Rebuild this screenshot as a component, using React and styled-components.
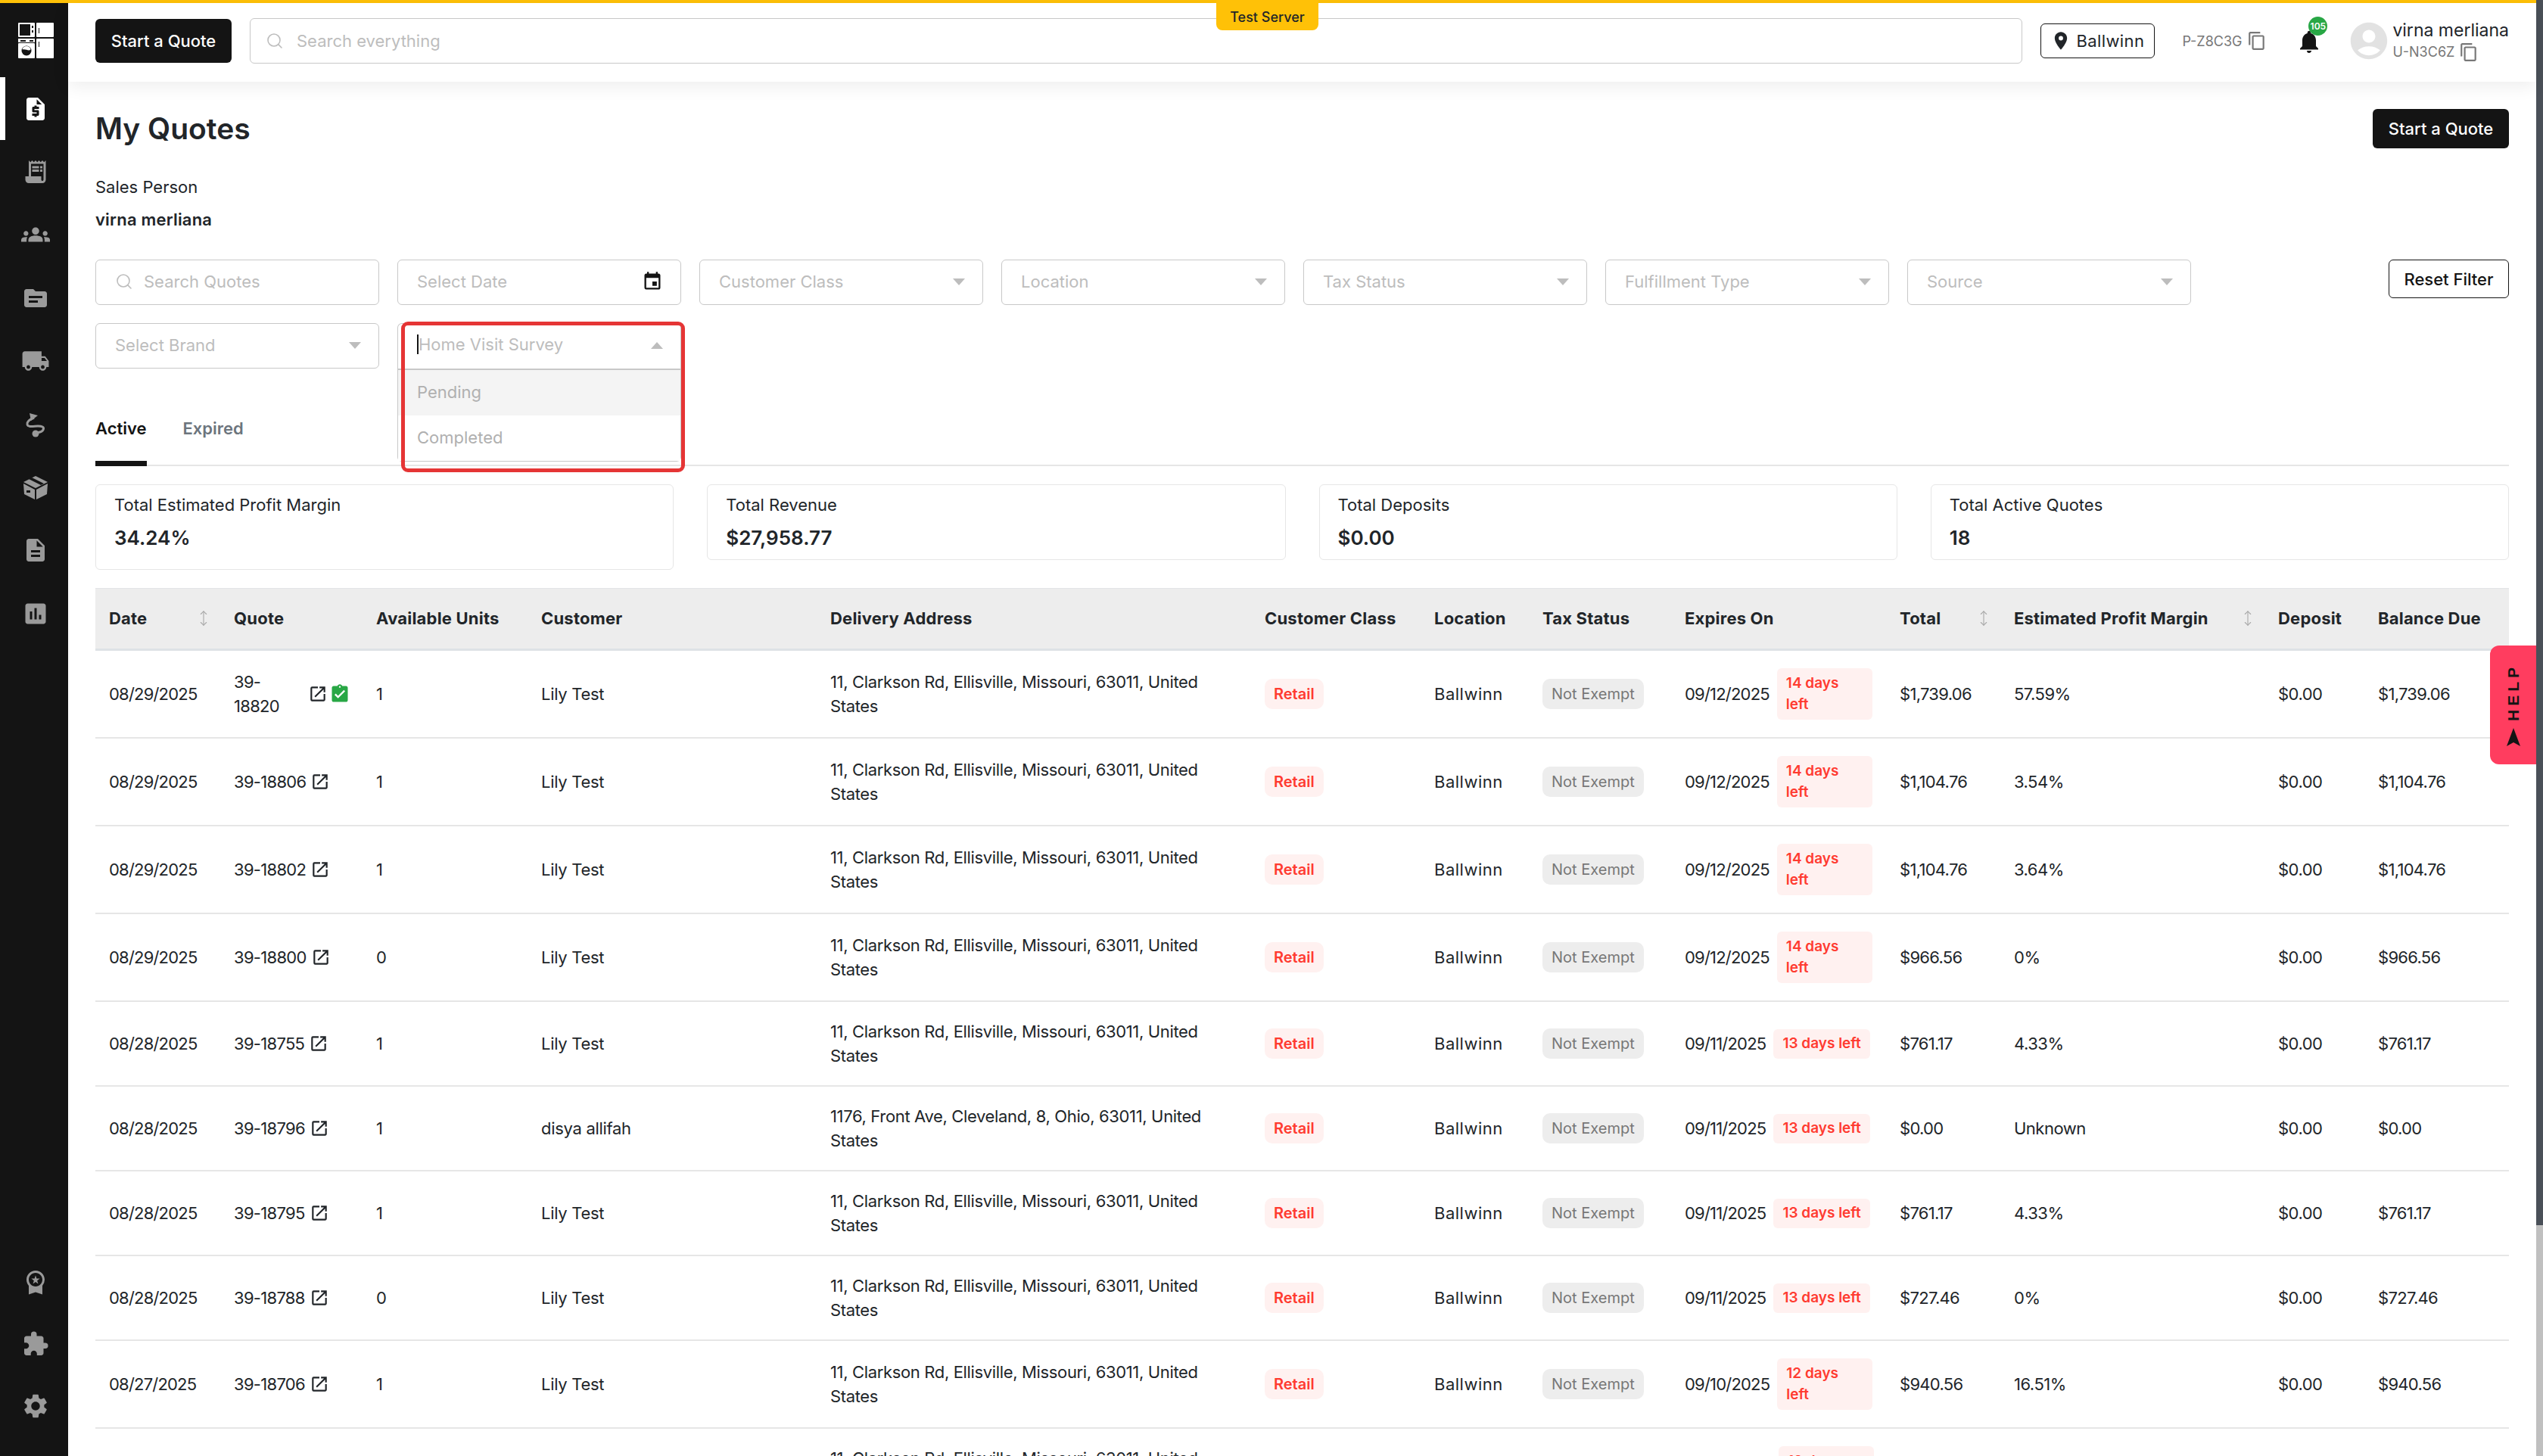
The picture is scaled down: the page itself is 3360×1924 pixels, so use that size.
import React from 'react';
import styled, { createGlobalStyle } from 'styled-components';
import {
  MdRequestQuote,
  MdReceiptLong,
  MdGroups,
  MdTopic,
  MdLocalShipping,
  MdDescription,
  MdAssessment,
  MdWorkspacePremium,
  MdExtension,
  MdSettings,
  MdEvent,
  MdLocationOn,
  MdOutlineContentCopy,
  MdNotifications,
  MdAccountCircle,
  MdOpenInNew,
  MdAssignmentTurnedIn,
} from 'react-icons/md';
import { Search, MoveVertical } from 'lucide-react';

const GlobalStyle = createGlobalStyle`
  html, body {
    margin: 0;
    padding: 0;
    background: #fff;
    font-family: Inter, "Liberation Sans", sans-serif;
    color: #212529;
  }
  * { box-sizing: border-box; }
`;

const Page = styled.div`
  position: relative;
  display: flex;
  height: 1924px;
  overflow: hidden;
`;

const Column = styled.div`
  flex: 1;
  min-width: 0;
  display: flex;
  flex-direction: column;
`;

const TopStripe = styled.div`
  height: 4px;
  flex: none;
  background: #ffc107;
`;

const Body = styled.div`
  flex: 1;
  min-height: 0;
  display: flex;
`;

const Scrollbar = styled.div`
  width: 9px;
  flex: none;
  background: #c0c0c0;
`;

const ScrollThumb = styled.div`
  height: 1619px;
  background: #4a5058;
`;

const Sidebar = styled.nav`
  width: 90px;
  flex: none;
  background: #141414;
  display: flex;
  flex-direction: column;
  justify-content: space-between;
  padding-bottom: 25px;
`;

const LogoBox = styled.div`
  height: 98px;
  padding: 26px 0 0 24px;
`;

const NavItem = styled.div`
  height: ${props => props.$h || 83.4}px;
  display: flex;
  align-items: center;
  justify-content: center;
  color: ${props => (props.$active ? '#fff' : '#9a9a9a')};
  border-left: 7px solid ${props => (props.$active ? '#fff' : 'transparent')};
  padding-right: 4px;
`;

const Main = styled.main`
  flex: 1;
  min-width: 0;
  display: flex;
  flex-direction: column;
`;

const Header = styled.header`
  position: relative;
  height: 104px;
  flex: none;
  display: flex;
  align-items: center;
  padding: 0 36px 4px;
  gap: 24px;
  background: #fff;
  box-shadow: 0 6px 22px rgba(0, 0, 0, 0.07);
`;

const ServerBadge = styled.div`
  position: absolute;
  top: -4px;
  left: 1517px;
  width: 135px;
  height: 40px;
  padding-top: 4px;
  display: flex;
  align-items: center;
  justify-content: center;
  background: #ffc107;
  border-radius: 0 0 8px 8px;
  font-size: 18px;
  font-weight: 500;
`;

const DarkButton = styled.button`
  width: 180px;
  height: ${props => props.$h || 58}px;
  flex: none;
  border: 0;
  border-radius: 6px;
  background: #141414;
  color: #fff;
  font: 500 22px Inter, "Liberation Sans", sans-serif;
`;

const SearchBar = styled.div`
  flex: 1;
  height: 60px;
  display: flex;
  align-items: center;
  gap: 17px;
  padding-left: 20px;
  border: 1px solid #c8c8c8;
  border-radius: 6px;
  color: #bdbdbd;
  font-size: 22px;
`;

const LocationButton = styled.div`
  width: 151px;
  height: 46px;
  flex: none;
  display: flex;
  align-items: center;
  gap: 6px;
  padding-left: 12px;
  border: 1px solid #141414;
  border-radius: 6px;
  font-size: 22px;
  letter-spacing: 0.4px;
`;

const CodeRow = styled.div`
  display: flex;
  align-items: center;
  gap: 6px;
  color: #777;
  font-size: ${props => props.$size || 18}px;
`;

const PlantCode = styled(CodeRow)`
  width: 120px;
  margin-left: 12px;
`;

const BellBox = styled.div`
  position: relative;
  width: 34px;
  height: 34px;
  margin-left: 6px;
  color: #141414;
`;

const BellBadge = styled.span`
  position: absolute;
  top: -15px;
  left: 17px;
  width: 25px;
  height: 25px;
  border-radius: 50%;
  background: #28a745;
  color: #fff;
  font-size: 12px;
  font-weight: 600;
  display: flex;
  align-items: center;
  justify-content: center;
`;

const UserBox = styled.div`
  display: flex;
  align-items: center;
  gap: 2px;
  margin-left: 10px;
  color: #e2e2e2;
`;

const UserText = styled.div`
  display: flex;
  flex-direction: column;
  gap: 3px;
  color: #212529;
  font-size: 23px;
  line-height: 26px;
`;

const Content = styled.div`
  flex: 1;
  min-height: 0;
  padding: 36px 36px 0;
`;

const TitleRow = styled.div`
  display: flex;
  justify-content: space-between;
  align-items: flex-start;
  height: 88px;
`;

const Title = styled.h1`
  margin: 0;
  font-size: 39px;
  line-height: 52px;
  font-weight: 600;
`;

const Person = styled.div`
  height: 86px;
  padding-top: 2px;
  font-size: 22px;
  line-height: 27px;
`;

const PersonName = styled.div`
  margin-top: 16px;
  font-weight: 600;
  letter-spacing: 0.2px;
`;

const FilterSection = styled.section`
  display: flex;
  justify-content: space-between;
  align-items: flex-start;
  margin-top: 25px;
`;

const FilterGrid = styled.div`
  display: grid;
  grid-template-columns: repeat(7, 375px);
  grid-auto-rows: 60px;
  gap: 24px;
`;

const Field = styled.div`
  position: relative;
  display: flex;
  align-items: center;
  justify-content: space-between;
  padding: 0 23px 2px 25px;
  border: 1px solid #c8c8c8;
  border-radius: ${props => (props.$open ? '6px 6px 0 0' : '6px')};
  border-bottom-width: ${props => (props.$open ? 0 : 1)}px;
  color: #bdbdbd;
  font-size: 22px;
`;

const SearchField = styled(Field)`
  justify-content: flex-start;
  gap: 14px;
`;

const Caret = styled.span`
  width: 0;
  height: 0;
  border-left: 8px solid transparent;
  border-right: 8px solid transparent;
  ${props =>
    props.$up ? 'border-bottom: 9px solid #bdbdbd;' : 'border-top: 9px solid #bdbdbd;'}
`;

const TypedText = styled.span`
  border-left: 2px solid #141414;
  line-height: 26px;
  margin-top: -4px;
`;

const Menu = styled.div`
  position: absolute;
  z-index: 3;
  top: 59px;
  left: -1px;
  right: -1px;
  background: #fff;
  border: 1px solid #c8c8c8;
  border-top: 2px solid #c8c8c8;
  border-radius: 0 0 6px 6px;
  color: #b0b0b0;
`;

const MenuOption = styled.div`
  height: 60px;
  display: flex;
  align-items: center;
  padding: 0 0 3px 25px;
  background: ${props => (props.$hover ? '#f4f4f4' : '#fff')};
`;

const RedMark = styled.div`
  position: absolute;
  z-index: 4;
  top: -3px;
  left: 4px;
  width: 375px;
  height: 199px;
  border: 5px solid #e53535;
  border-radius: 9px;
  pointer-events: none;
`;

const OutlineButton = styled.button`
  width: 159px;
  height: 51px;
  background: #fff;
  border: 1px solid #141414;
  border-radius: 6px;
  color: #141414;
  font: 500 22px Inter, "Liberation Sans", sans-serif;
`;

const Tabs = styled.div`
  display: flex;
  gap: 48px;
  margin-top: 66px;
  border-bottom: 2px solid #e6e6e6;
  height: 63px;
`;

const Tab = styled.div`
  height: 63px;
  font-size: 22px;
  line-height: 26px;
  font-weight: 600;
  color: ${props => (props.$active ? '#141414' : '#6c757d')};
  border-bottom: 7px solid ${props => (props.$active ? '#141414' : 'transparent')};
`;

const StatGrid = styled.div`
  display: grid;
  grid-template-columns: repeat(4, 1fr);
  gap: 44px;
  align-items: start;
  margin-top: 24px;
`;

const StatCard = styled.div`
  height: ${props => (props.$tall ? 113 : 100)}px;
  padding: 12px 24px 0;
  border: 1px solid #e6e6e6;
  border-radius: 6px;
  font-size: 22px;
  line-height: 28px;
`;

const StatValue = styled.div`
  margin-top: 12px;
  font-size: 26px;
  line-height: 36px;
  font-weight: 600;
`;

const Table = styled.table`
  width: 3189px;
  margin-top: 24px;
  border-collapse: collapse;
  table-layout: fixed;
  font-size: 22px;
  line-height: 32px;
`;

const Th = styled.th`
  height: 81px;
  padding: 0 0 2px 18px;
  background: #ededed;
  border-top: 1px solid #e2e4e7;
  border-bottom: 3px solid #dee2e6;
  text-align: left;
  font-size: 22px;
  font-weight: 700;
  color: #212529;
  white-space: nowrap;
`;

const ThInner = styled.div`
  display: flex;
  align-items: center;
  justify-content: space-between;
  padding-right: 11px;
  letter-spacing: 0.2px;
  color: #212529;

  svg {
    color: #a8a8a8;
    flex: none;
  }
`;

const Tr = styled.tr`
  border-bottom: 2px solid #e6e6e6;
`;

const Td = styled.td`
  padding: 23px 18px;
  font-weight: 400;
  vertical-align: middle;
  letter-spacing: ${props => props.$track || 0}px;
`;

const ClippedTd = styled(Td)`
  vertical-align: top;
`;

const QuoteCell = styled.div`
  display: flex;
  align-items: center;
  gap: 6px;
  margin-right: -12px;
  color: #212529;
`;

const QuoteNumber = styled.span`
  letter-spacing: -0.7px;
  ${props => (props.$wrap ? 'width: 92px;' : 'white-space: nowrap;')}
`;

const AddressText = styled.div`
  width: 510px;
  letter-spacing: -0.35px;
`;

const Chip = styled.span`
  display: inline-flex;
  align-items: center;
  height: 40px;
  padding: 0 12px;
  border-radius: 10px;
  font-size: 20px;
  white-space: nowrap;
  background: ${props => (props.$red ? '#fff1f0' : '#ededed')};
  color: ${props => (props.$red ? '#ff3b30' : '#777')};
  font-weight: ${props => (props.$red ? 600 : 400)};
`;

const ExpiresCell = styled.div`
  display: flex;
  align-items: center;
  gap: 10px;
  margin-right: -18px;
  white-space: nowrap;
`;

const ExpiryDate = styled.span`
  letter-spacing: -0.8px;
`;

const DaysTag = styled.span`
  flex: none;
  padding: ${props => (props.$stack ? 6 : 5.5)}px 12px;
  border-radius: 6px;
  background: #fff1f0;
  color: #ff3b30;
  font-size: 19px;
  line-height: 28px;
  font-weight: 600;
  white-space: ${props => (props.$stack ? 'normal' : 'nowrap')};
  width: ${props => (props.$stack ? '126px' : 'auto')};
  margin-left: ${props => props.$offset || 0}px;
`;

const HelpTab = styled.div`
  position: absolute;
  z-index: 5;
  top: 853px;
  right: 9px;
  width: 61px;
  height: 157px;
  display: flex;
  flex-direction: column;
  align-items: center;
  justify-content: center;
  gap: 8px;
  background: #ff3d5f;
  border-radius: 12px 0 0 12px;
  color: #141414;
`;

const HelpLabel = styled.span`
  writing-mode: vertical-rl;
  transform: rotate(180deg);
  font: 700 21px "Liberation Sans", sans-serif;
  letter-spacing: 5px;
`;

const Logo = () => (
  <svg width="47" height="47" viewBox="0 0 47 47">
    <rect x="0" y="0" width="22" height="19" rx="1" fill="#fff" />
    <rect x="2" y="2" width="14" height="15" fill="#141414" />
    <rect x="18" y="4" width="2" height="3" fill="#141414" />
    <rect x="18" y="10" width="2" height="3" fill="#141414" />
    <rect x="24" y="0" width="23" height="19" rx="1" fill="#fff" />
    <rect x="27" y="7" width="1" height="7" fill="#141414" />
    <rect x="0" y="21" width="22" height="5" fill="#fff" />
    <rect x="3" y="23" width="7" height="2" fill="#141414" />
    <rect x="15" y="23" width="5" height="2" fill="#141414" />
    <rect x="0" y="27" width="22" height="20" rx="1" fill="#fff" />
    <circle cx="11" cy="37" r="6.5" fill="#141414" />
    <path d="M5.5 35.5a5.6 5.6 0 0 1 11 0c-3 2.4-6 -1-11 0z" fill="#fff" />
    <rect x="24" y="21" width="23" height="26" rx="1" fill="#fff" />
    <rect x="27" y="25" width="1" height="7" fill="#141414" />
  </svg>
);

const RouteIcon = () => (
  <svg width="36" height="36" viewBox="0 0 36 36" fill="none">
    <path d="M10 3l11 3-9 7z" fill="currentColor" />
    <path
      d="M15 10c-5 2-10 5-9 9s9 2 14 2 9 1 7 5-8 3-9 4"
      transform="translate(1 -1)"
      stroke="currentColor"
      strokeWidth="3"
    />
    <circle cx="18" cy="30" r="4.5" fill="currentColor" />
  </svg>
);

const BoxIcon = () => (
  <svg width="36" height="36" viewBox="0 0 36 36">
    <path d="M2 11l16-8 16 8-16 8z" fill="currentColor" />
    <path d="M9 7l16 8 4-2L13 5z" fill="#141414" />
    <path d="M2 13l15 8v13L3 27z" fill="currentColor" />
    <path d="M19 21l15-8-1 14-14 7z" fill="currentColor" />
    <rect x="6" y="22" width="5" height="3" fill="#141414" />
  </svg>
);

const CopyIcon = ({ size = 26 }) => <MdOutlineContentCopy size={size} />;

const HelpArrow = () => (
  <svg width="20" height="24" viewBox="0 0 20 24">
    <path d="M10 0l9 24-9-5-9 5z" fill="#141414" />
  </svg>
);

const SortIcon = () => <MoveVertical size={22} strokeWidth={1.2} />;

const navTop = [
  <MdRequestQuote size={36} />,
  <MdReceiptLong size={36} />,
  <MdGroups size={38} />,
  <MdTopic size={36} />,
  <MdLocalShipping size={38} />,
  <RouteIcon />,
  <BoxIcon />,
  <MdDescription size={36} />,
  <MdAssessment size={36} />,
];

const navBottom = [
  <MdWorkspacePremium size={36} />,
  <MdExtension size={36} />,
  <MdSettings size={38} />,
];

const topFilters = ['Customer Class', 'Location', 'Tax Status', 'Fulfillment Type', 'Source'];

const stats = [
  { label: 'Total Estimated Profit Margin', value: '34.24%', tall: true },
  { label: 'Total Revenue', value: '$27,958.77' },
  { label: 'Total Deposits', value: '$0.00' },
  { label: 'Total Active Quotes', value: '18' },
];

const columns = [
  { label: 'Date', width: 165, sort: true },
  { label: 'Quote', width: 188 },
  { label: 'Available Units', width: 218 },
  { label: 'Customer', width: 382 },
  { label: 'Delivery Address', width: 574 },
  { label: 'Customer Class', width: 224 },
  { label: 'Location', width: 143 },
  { label: 'Tax Status', width: 188 },
  { label: 'Expires On', width: 284 },
  { label: 'Total', width: 151, sort: true },
  { label: 'Estimated Profit Margin', width: 349, sort: true },
  { label: 'Deposit', width: 132 },
  { label: 'Balance Due', width: 191 },
];

const clarkson = '11, Clarkson Rd, Ellisville, Missouri, 63011, United States';
const front = '1176, Front Ave, Cleveland, 8, Ohio, 63011, United States';

const rows = [
  { date: '08/29/2025', quote: '39-18820', units: 1, customer: 'Lily Test', address: clarkson, expires: '09/12/2025', days: '14 days left', total: '$1,739.06', margin: '57.59%', balance: '$1,739.06', done: true },
  { date: '08/29/2025', quote: '39-18806', units: 1, customer: 'Lily Test', address: clarkson, expires: '09/12/2025', days: '14 days left', total: '$1,104.76', margin: '3.54%', balance: '$1,104.76' },
  { date: '08/29/2025', quote: '39-18802', units: 1, customer: 'Lily Test', address: clarkson, expires: '09/12/2025', days: '14 days left', total: '$1,104.76', margin: '3.64%', balance: '$1,104.76' },
  { date: '08/29/2025', quote: '39-18800', units: 0, customer: 'Lily Test', address: clarkson, expires: '09/12/2025', days: '14 days left', total: '$966.56', margin: '0%', balance: '$966.56' },
  { date: '08/28/2025', quote: '39-18755', units: 1, customer: 'Lily Test', address: clarkson, expires: '09/11/2025', days: '13 days left', total: '$761.17', margin: '4.33%', balance: '$761.17' },
  { date: '08/28/2025', quote: '39-18796', units: 1, customer: 'disya allifah', address: front, expires: '09/11/2025', days: '13 days left', total: '$0.00', margin: 'Unknown', balance: '$0.00' },
  { date: '08/28/2025', quote: '39-18795', units: 1, customer: 'Lily Test', address: clarkson, expires: '09/11/2025', days: '13 days left', total: '$761.17', margin: '4.33%', balance: '$761.17' },
  { date: '08/28/2025', quote: '39-18788', units: 0, customer: 'Lily Test', address: clarkson, expires: '09/11/2025', days: '13 days left', total: '$727.46', margin: '0%', balance: '$727.46' },
  { date: '08/27/2025', quote: '39-18706', units: 1, customer: 'Lily Test', address: clarkson, expires: '09/10/2025', days: '12 days left', total: '$940.56', margin: '16.51%', balance: '$940.56' },
];

const QuoteRow = ({ row }) => (
  <Tr>
    <Td $track={-0.8}>{row.date}</Td>
    <Td>
      <QuoteCell>
        <QuoteNumber $wrap={row.done}>{row.quote}</QuoteNumber>
        <MdOpenInNew size={26} />
        {row.done && <MdAssignmentTurnedIn size={28} color="#28a745" style={{ marginLeft: -4 }} />}
      </QuoteCell>
    </Td>
    <Td>{row.units}</Td>
    <Td $track={-0.3}>{row.customer}</Td>
    <Td>
      <AddressText>{row.address}</AddressText>
    </Td>
    <Td>
      <Chip $red>Retail</Chip>
    </Td>
    <Td $track={0.5}>Ballwinn</Td>
    <Td>
      <Chip>Not Exempt</Chip>
    </Td>
    <Td>
      <ExpiresCell>
        <ExpiryDate>{row.expires}</ExpiryDate>
        <DaysTag $stack={!row.days.startsWith('13')}>{row.days}</DaysTag>
      </ExpiresCell>
    </Td>
    <Td $track={-0.7}>{row.total}</Td>
    <Td $track={-0.5}>{row.margin}</Td>
    <Td $track={-0.5}>$0.00</Td>
    <Td $track={-0.7}>{row.balance}</Td>
  </Tr>
);

export default function App() {
  return (
    <Page>
      <GlobalStyle />
      <Column>
        <TopStripe />
        <Body>
          <Sidebar>
            <div>
              <LogoBox>
                <Logo />
              </LogoBox>
              {navTop.map((icon, i) => (
                <NavItem key={i} $active={i === 0}>
                  {icon}
                </NavItem>
              ))}
            </div>
            <div>
              {navBottom.map((icon, i) => (
                <NavItem key={i} $h={82}>
                  {icon}
                </NavItem>
              ))}
            </div>
          </Sidebar>
          <Main>
            <Header>
              <DarkButton>Start a Quote</DarkButton>
              <SearchBar>
                <Search size={24} strokeWidth={1.6} />
                Search everything
              </SearchBar>
              <LocationButton>
                <MdLocationOn size={28} />
                Ballwinn
              </LocationButton>
              <PlantCode>
                P-Z8C3G
                <CopyIcon />
              </PlantCode>
              <BellBox>
                <MdNotifications size={36} />
                <BellBadge>105</BellBadge>
              </BellBox>
              <UserBox>
                <MdAccountCircle size={58} />
                <UserText>
                  virna merliana
                  <CodeRow>
                    U-N3C6Z
                    <CopyIcon />
                  </CodeRow>
                </UserText>
              </UserBox>
              <ServerBadge>Test Server</ServerBadge>
            </Header>
            <Content>
              <TitleRow>
                <Title>My Quotes</Title>
                <DarkButton $h={52}>Start a Quote</DarkButton>
              </TitleRow>
              <Person>
                Sales Person
                <PersonName>virna merliana</PersonName>
              </Person>
              <FilterSection>
                <FilterGrid>
                  <SearchField>
                    <Search size={24} strokeWidth={1.6} />
                    Search Quotes
                  </SearchField>
                  <Field>
                    Select Date
                    <MdEvent size={28} color="#141414" />
                  </Field>
                  {topFilters.map(name => (
                    <Field key={name}>
                      {name}
                      <Caret />
                    </Field>
                  ))}
                  <Field>
                    Select Brand
                    <Caret />
                  </Field>
                  <Field $open>
                    <TypedText>Home Visit Survey</TypedText>
                    <Caret $up />
                    <Menu>
                      <MenuOption $hover>Pending</MenuOption>
                      <MenuOption>Completed</MenuOption>
                    </Menu>
                    <RedMark />
                  </Field>
                </FilterGrid>
                <OutlineButton>Reset Filter</OutlineButton>
              </FilterSection>
              <Tabs>
                <Tab $active>Active</Tab>
                <Tab>Expired</Tab>
              </Tabs>
              <StatGrid>
                {stats.map(stat => (
                  <StatCard key={stat.label} $tall={stat.tall}>
                    {stat.label}
                    <StatValue>{stat.value}</StatValue>
                  </StatCard>
                ))}
              </StatGrid>
              <Table>
                <colgroup>
                  {columns.map(col => (
                    <col key={col.label} width={col.width} />
                  ))}
                </colgroup>
                <thead>
                  <tr>
                    {columns.map(col => (
                      <Th key={col.label}>
                        <ThInner>
                          {col.label}
                          {col.sort && <SortIcon />}
                        </ThInner>
                      </Th>
                    ))}
                  </tr>
                </thead>
                <tbody>
                  {rows.map(row => (
                    <QuoteRow key={row.quote} row={row} />
                  ))}
                  <tr>
                    <ClippedTd colSpan={4} />
                    <ClippedTd>
                      <AddressText>{clarkson}</AddressText>
                    </ClippedTd>
                    <ClippedTd colSpan={3} />
                    <ClippedTd>
                      <ExpiresCell>
                        <DaysTag $stack $offset={124}>
                          12 days left
                        </DaysTag>
                      </ExpiresCell>
                    </ClippedTd>
                    <ClippedTd colSpan={4} />
                  </tr>
                </tbody>
              </Table>
            </Content>
          </Main>
        </Body>
      </Column>
      <Scrollbar>
        <ScrollThumb />
      </Scrollbar>
      <HelpTab>
        <HelpLabel>HELP</HelpLabel>
        <HelpArrow />
      </HelpTab>
    </Page>
  );
}
